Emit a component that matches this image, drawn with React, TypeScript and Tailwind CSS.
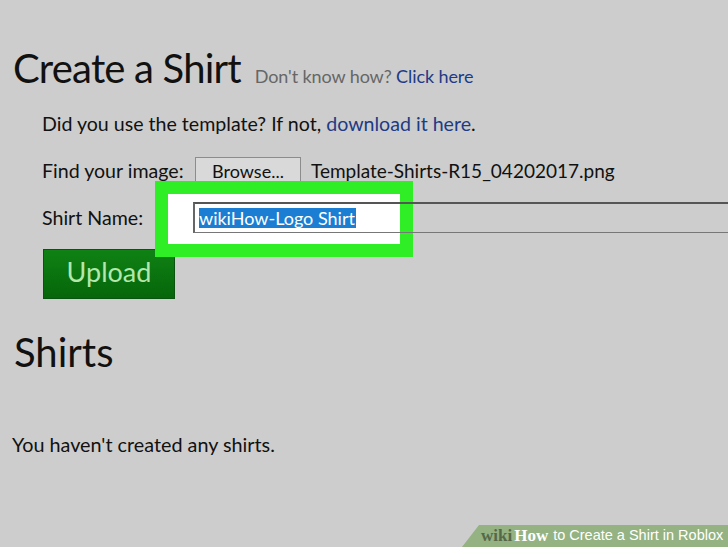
export default function App() {
  return (
    <div className="relative w-[728px] h-[547px] overflow-hidden bg-[#cdcdcd] font-['Lato',sans-serif] text-[#111]">
      {/* heading */}
      <div className="pt-[44px] pl-[13px] flex items-baseline h-[92px]">
        <h1 className="text-[40px] leading-[48px] tracking-[-0.8px]">Create a Shirt</h1>
        <span className="ml-[14px] text-[18px] text-[#666] tracking-[-0.1px]">
          Don't know how? <a className="text-[#1d3b86]">Click here</a>
        </span>
      </div>

      <div className="pl-[42px] text-[19.6px]">
        <p className="mt-[20px] leading-[24px]">
          Did you use the template? If not, <a className="text-[#1d3b86]">download it here</a>.
        </p>

        <div className="mt-[21px] h-[28px] flex items-center">
          <span className="w-[153px] shrink-0 leading-[24px]">Find your image:</span>
          <div className="h-[28px] w-[106px] shrink-0 flex items-center justify-center border border-[#8c8c8c] bg-[#d9d9d9] text-[18px]">
            Browse...
          </div>
          <span className="ml-[10px] leading-[24px] text-[19px] whitespace-nowrap">Template-Shirts-R15_04202017.png</span>
        </div>

        <div className="relative z-20 mt-[17px] h-[31px] flex items-center">
          <span className="w-[151px] shrink-0 leading-[24px]">Shirt Name:</span>
          <div className="h-[31px] w-[560px] shrink-0 flex items-center pl-[4px] border-t-2 border-l-2 border-b border-t-[#555] border-l-[#666] border-b-[#777]">
            <span className="bg-[#1b7ed2] text-white text-[18px] leading-[20px] pr-[1px] whitespace-nowrap">wikiHow-Logo Shirt</span>
          </div>
        </div>

        <button className="mt-[16px] ml-[1px] h-[50px] w-[132px] border border-[#0b5310] bg-gradient-to-b from-[#0f8214] to-[#06660a] text-[#b4e7ab] text-[27px] leading-[30px] pb-[4px]">
          Upload
        </button>
      </div>

      <h2 className="mt-[29px] pl-[14px] text-[40px] leading-[48px]">Shirts</h2>
      <p className="mt-[56px] pl-[12px] text-[19.8px] leading-[24px]">You haven't created any shirts.</p>

      {/* highlight box */}
      <div className="absolute z-10 left-[155px] top-[181px] w-[258px] h-[76px] border-[13px] border-[#30ee26] bg-white" />

      {/* wikiHow badge */}
      <div className="absolute right-0 bottom-0 h-[22px] w-[266px] bg-[#94b282] [clip-path:polygon(17px_0,100%_0,100%_100%,0_100%)] flex items-center pl-[19px] whitespace-nowrap">
        <span className="font-['Liberation_Serif',serif] font-bold text-[17px] text-[#56684a]">wiki</span>
        <span className="font-['Liberation_Serif',serif] font-bold text-[17px] text-white ml-[2px]">How</span>
        <span className="font-['Liberation_Sans',sans-serif] text-[14.5px] text-white ml-[5px]">to Create a Shirt in Roblox</span>
      </div>
    </div>
  );
}
